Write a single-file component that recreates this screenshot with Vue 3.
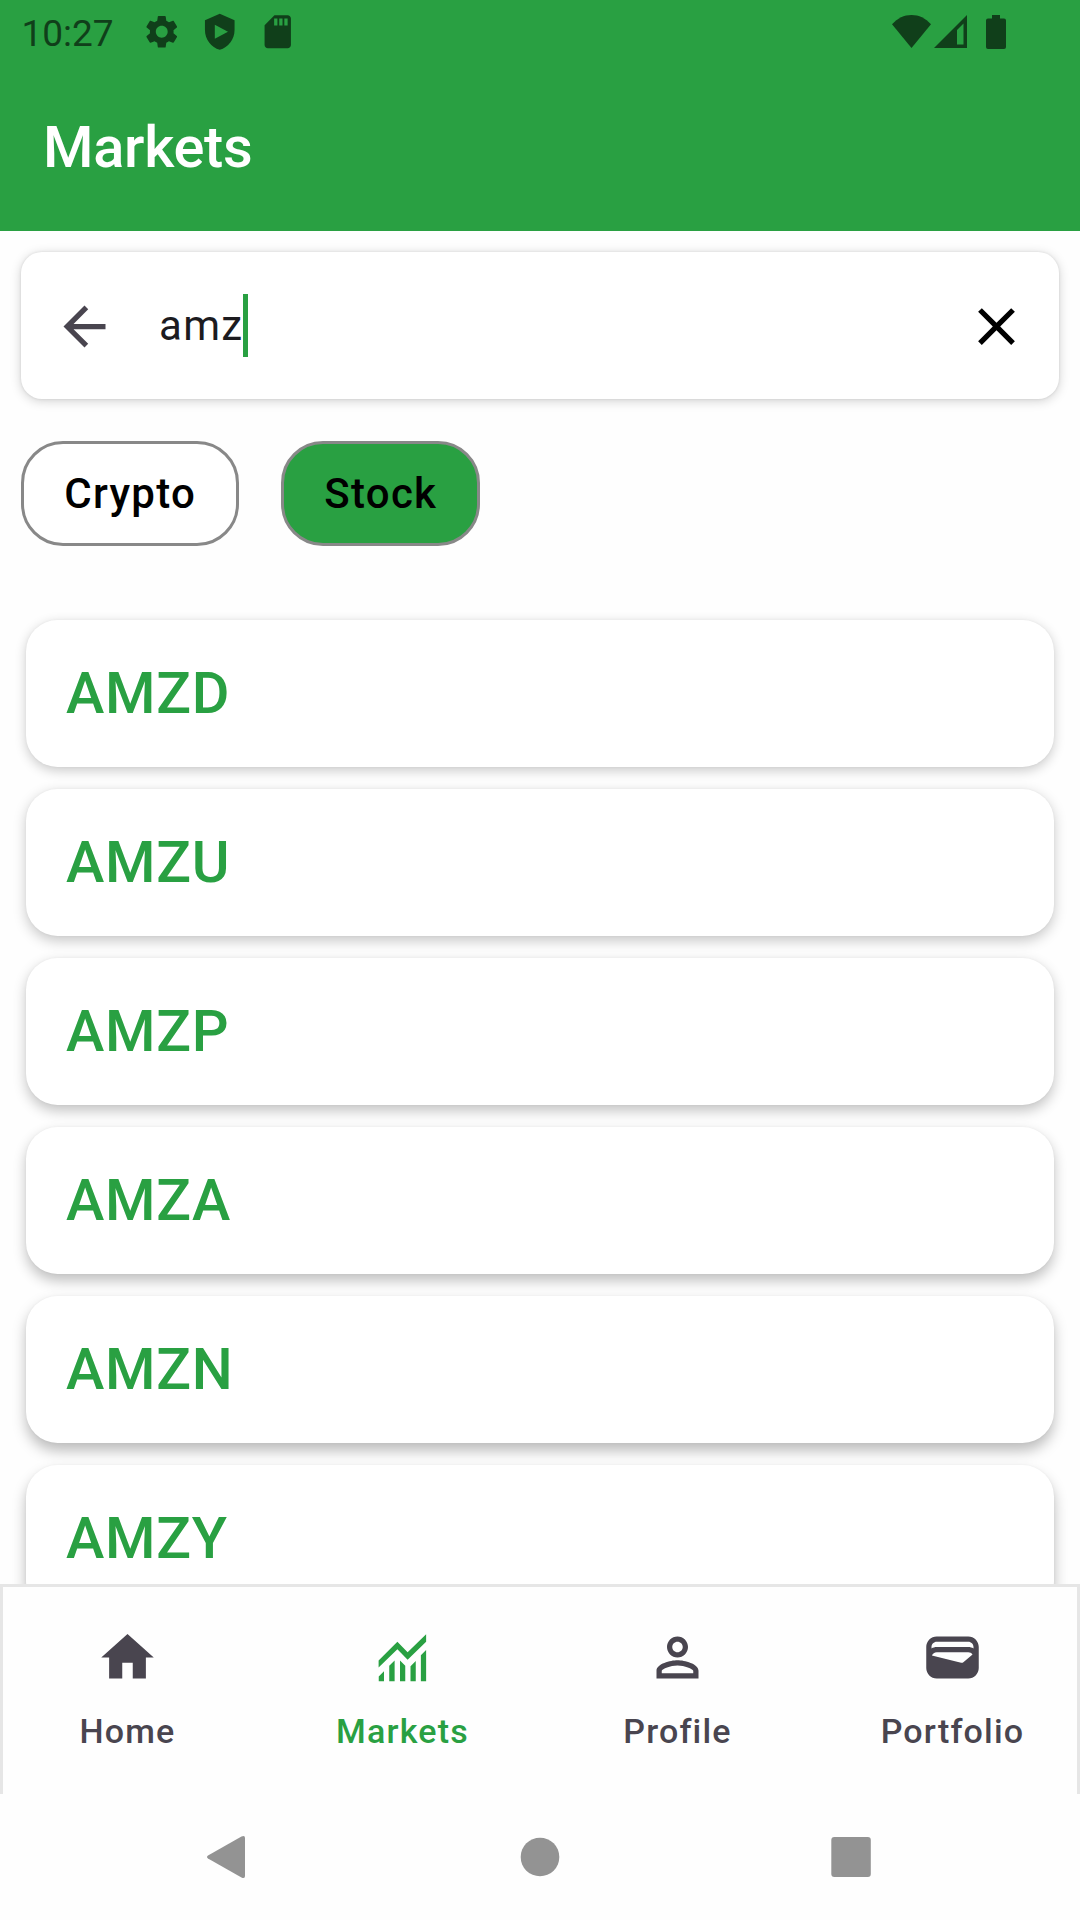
<script setup>
import { ref } from 'vue'

const query = ref('amz')
const chips = [
  { label: 'Crypto', selected: false },
  { label: 'Stock', selected: true },
]
const symbols = ['AMZD', 'AMZU', 'AMZP', 'AMZA', 'AMZN', 'AMZY']

// Elevation shadows fall further the lower a card sits on the screen.
const shadow = (i) => ({
  boxShadow: `0 ${3.5 + i * 0.9}px ${12 + i * 0.4}px rgba(0,0,0,${0.2 + i * 0.015}), 0 0 3px rgba(0,0,0,0.04)`,
})

const tabs = [
  { label: 'Home', d: 'M10 20v-6h4v6h5v-8h3L12 3 2 12h3v8z' },
  {
    label: 'Markets',
    active: true,
    d: 'M2.9 13.1L10.05 6l3.9 4L21 3.1v2.9l-7.05 6.9-3.9-4L2.9 15.8zM2.95 19.2l2-1.95V21h-2zM6.95 15.1L9 13.1V21H6.95zM11.05 13.1l2 2.05V21h-2zM15.05 15.3l2-2V21h-2zM19 11.1l2-2V21h-2z',
  },
  {
    label: 'Profile',
    d: 'M12 6c1.1 0 2 .9 2 2s-.9 2-2 2-2-.9-2-2 .9-2 2-2m0 9c2.7 0 5.8 1.29 6 2v1H6v-.99c.2-.72 3.3-2.01 6-2.01m0-11C9.79 4 8 5.79 8 8s1.79 4 4 4 4-1.79 4-4-1.79-4-4-4zm0 9c-2.67 0-8 1.34-8 4v3h16v-3c0-2.66-5.33-4-8-4z',
  },
  {
    label: 'Portfolio',
    d: 'M18 4H6C3.79 4 2 5.79 2 8v8c0 2.21 1.79 4 4 4h12c2.21 0 4-1.79 4-4V8c0-2.21-1.79-4-4-4zm-1.86 9.77c-.24.2-.57.28-.88.2L4.15 11.25C4.45 10.52 5.16 10 6 10h12c.67 0 1.26.34 1.63.84l-3.49 2.93zM6 6h12c1.1 0 2 .9 2 2v.55c-.59-.34-1.27-.55-2-.55H6c-.73 0-1.41.21-2 .55V8c0-1.1.9-2 2-2z',
  },
]
</script>

<template>
  <div class="screen">
    <header class="top">
      <div class="status">
        <span class="time">10:27</span>
        <div class="notices">
          <svg viewBox="0 0 24 24"><path d="M19.14 12.94c.04-.3.06-.61.06-.94 0-.32-.02-.64-.07-.94l2.03-1.58c.18-.14.23-.41.12-.61l-1.92-3.32c-.12-.22-.37-.29-.59-.22l-2.39.96c-.5-.38-1.03-.7-1.62-.94l-.36-2.54c-.04-.24-.24-.41-.48-.41h-3.84c-.24 0-.43.17-.47.41l-.36 2.54c-.59.24-1.13.57-1.62.94l-2.39-.96c-.22-.08-.47 0-.59.22L2.74 8.87c-.12.21-.08.47.12.61l2.03 1.58c-.05.3-.09.63-.09.94s.02.64.07.94l-2.03 1.58c-.18.14-.23.41-.12.61l1.92 3.32c.12.22.37.29.59.22l2.39-.96c.5.38 1.03.7 1.62.94l.36 2.54c.05.24.24.41.48.41h3.84c.24 0 .44-.17.47-.41l.36-2.54c.59-.24 1.13-.56 1.62-.94l2.39.96c.22.08.47 0 .59-.22l1.92-3.32c.12-.22.07-.47-.12-.61l-2.01-1.58zM12 15.6c-1.98 0-3.6-1.62-3.6-3.6s1.62-3.6 3.6-3.6 3.6 1.62 3.6 3.6-1.62 3.6-3.6 3.6z"/></svg>
          <svg viewBox="0 0 24 24"><path fill-rule="evenodd" d="M12 1L3 5v6c0 5.55 3.84 10.74 9 12 5.16-1.26 9-6.45 9-12V5zM9 7.8l8 4.2-8 4.2z"/></svg>
          <svg viewBox="0 0 24 24"><path fill-rule="evenodd" d="M18 2h-8L4 8v12c0 1.1.9 2 2 2h12c1.1 0 2-.9 2-2V4c0-1.100-.9-2-2-2zM9.800 4h2v4.200h-2zM12.900 4h2v4.200h-2zM16 4h2v4.200h-2z"/></svg>
        </div>
        <div class="system">
          <svg class="wifi" viewBox="0 0 39 33"><path d="M0 9.3C5.5 3.2 12 0 19.5 0S33.500 3.200 39 9.300L19.500 33z"/></svg>
          <svg class="signal" viewBox="0 0 33 33"><path fill-rule="evenodd" d="M33 0v33H0zM29.500 8.500L23 15v14.500h6.500z"/></svg>
          <svg class="battery" viewBox="0 0 20 34"><path d="M6 0h8v3.500h4q2 0 2 2V32q0 2-2 2H2q-2 0-2-2V5.500q0-2 2-2h4z"/></svg>
        </div>
      </div>
      <h1>Markets</h1>
    </header>

    <main>
      <div class="search">
        <svg class="back" viewBox="0 0 24 24"><path d="M20 11H7.830l5.590-5.590L12 4l-8 8 8 8 1.410-1.410L7.830 13H20z"/></svg>
        <span class="query">{{ query }}</span><i class="caret"></i>
        <svg class="clear" viewBox="0 0 24 24"><path d="M19 6.410L17.590 5 12 10.590 6.410 5 5 6.410 10.590 12 5 17.590 6.410 19 12 13.410 17.590 19 19 17.590 13.410 12z"/></svg>
      </div>
      <div class="chips">
        <button v-for="c in chips" :key="c.label" class="chip" :class="{ selected: c.selected }">{{ c.label }}</button>
      </div>
      <div class="list">
        <div v-for="(s, i) in symbols" :key="s" class="card" :style="shadow(i)">{{ s }}</div>
      </div>
    </main>

    <nav class="tabs">
      <div v-for="t in tabs" :key="t.label" class="tab" :class="{ active: t.active }">
        <svg viewBox="0 0 24 24"><path :d="t.d" /></svg>
        <span>{{ t.label }}</span>
      </div>
    </nav>

    <footer class="sysnav">
      <svg viewBox="0 0 48 48"><path d="M6 22.500L39.500 3.500Q43 2 43 5V43q0 3-3.500 1.500L6 25.500q-2-1.500 0-3z"/></svg>
      <svg viewBox="0 0 48 48"><circle cx="24" cy="24" r="19.300"/></svg>
      <svg viewBox="0 0 48 48"><rect x="4.300" y="4" width="39.500" height="40" rx="3"/></svg>
    </footer>
  </div>
</template>

<style>
body {
  margin: 0;
  background: #fff;
}
</style>

<style scoped>
.screen {
  width: 1080px;
  height: 1920px;
  display: flex;
  flex-direction: column;
  overflow: hidden;
  background: #fefefe;
  font-family: Roboto, "Liberation Sans", sans-serif;
}
svg {
  display: block;
  fill: currentColor;
  flex: none;
}
.top {
  height: 231px;
  flex: none;
  background: #29a042;
}
.status {
  height: 63px;
  display: flex;
  align-items: center;
  padding: 0 74px 0 21.500px;
  color: #103f1a;
}
.time {
  width: 120px;
  font-size: 37px;
  padding-top: 3px;
}
.notices {
  display: flex;
  gap: 18.500px;
}
.notices svg {
  width: 39.500px;
  height: 39.500px;
}
.system {
  margin-left: auto;
  display: flex;
  align-items: center;
}
.wifi {
  width: 39px;
  height: 33px;
  margin-right: 3px;
}
.signal {
  width: 33px;
  height: 33px;
  margin-right: 19px;
}
.battery {
  width: 20px;
  height: 34px;
}
h1 {
  margin: 0;
  padding-left: 43px;
  height: 168px;
  line-height: 168px;
  font-size: 57.750px;
  font-weight: 500;
  letter-spacing: -0.300px;
  color: #fff;
}
main {
  flex: 1;
  min-height: 0;
  overflow: hidden;
  padding: 21px 21px 0;
}
.search {
  height: 147px;
  display: flex;
  align-items: center;
  box-sizing: border-box;
  padding: 0 31.500px;
  border-radius: 21px;
  background: #fff;
  box-shadow: 0 2px 11px rgba(0, 0, 0, 0.18), 0 0 3px rgba(0, 0, 0, 0.1);
}
.back {
  width: 63px;
  height: 63px;
  margin: 1px 43.500px 0 0;
  color: #49454f;
}
.query {
  font-size: 42px;
  letter-spacing: 1.310px;
  color: #1c1b1f;
}
.caret {
  width: 5px;
  height: 63px;
  background: #29a042;
}
.clear {
  width: 63px;
  height: 63px;
  margin: 1px 0 0 auto;
  color: #000;
}
.chips {
  display: flex;
  gap: 42px;
  margin-top: 42px;
}
.chip {
  height: 105px;
  box-sizing: border-box;
  padding: 0 39.800px 0 40.200px;
  border: 3px solid #888;
  border-radius: 42px;
  background: #fff;
  font: 500 42px Roboto, "Liberation Sans", sans-serif;
  letter-spacing: 1.310px;
  color: #000;
}
.chip.selected {
  background: #29a042;
}
.list {
  margin: 74px 5px 0;
  display: flex;
  flex-direction: column;
  gap: 22px;
}
.card {
  height: 147px;
  line-height: 147px;
  padding-left: 40px;
  border-radius: 31.500px;
  background: #fff;
  font-size: 57.750px;
  font-weight: 500;
  letter-spacing: 0.700px;
  color: #29a042;
}
.tabs {
  height: 210px;
  flex: none;
  box-sizing: border-box;
  display: flex;
  border: 3px solid #e6e6e6;
  border-bottom: 0;
  background: #fefefe;
}
/* Column pitch is 275px, so the row runs slightly wider than its frame. */
.tab {
  flex: none;
  width: 275px;
  padding-top: 39px;
  display: flex;
  flex-direction: column;
  align-items: center;
  color: #49454f;
}
.tab:first-child {
  margin-left: -13px;
}
.tab svg {
  width: 63px;
  height: 63px;
}
.tab span {
  margin-top: 21px;
  font-size: 34px;
  line-height: 42px;
  font-weight: 500;
  letter-spacing: 1.200px;
}
.tab.active {
  color: #29a042;
}
.sysnav {
  height: 126px;
  flex: none;
  display: flex;
  align-items: center;
  justify-content: space-between;
  padding: 0 205px 0 202px;
  color: #939393;
}
.sysnav svg {
  width: 48px;
  height: 48px;
}
.sysnav svg:nth-child(2) {
  margin-left: 3px;
}
</style>
